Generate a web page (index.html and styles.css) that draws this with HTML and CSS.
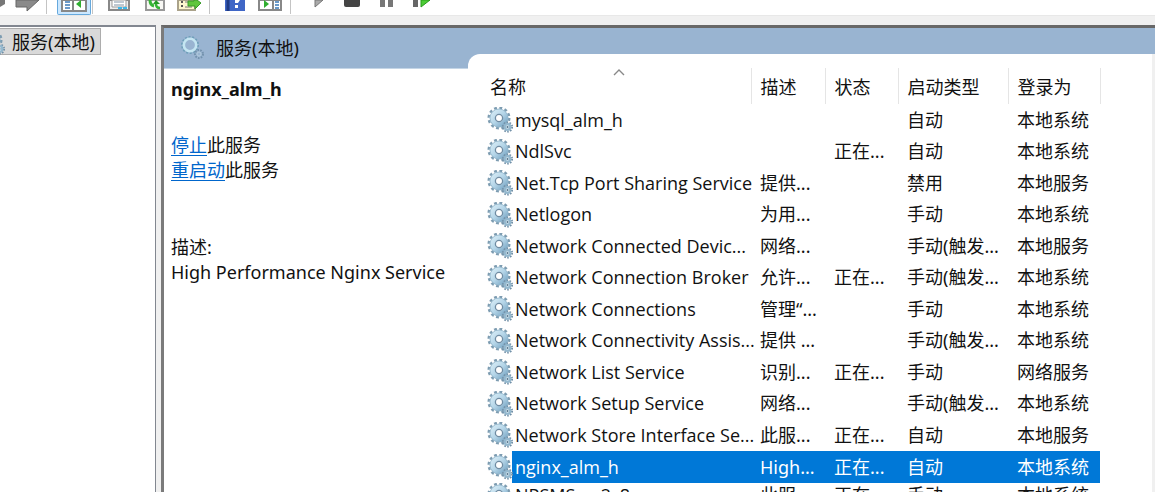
FILE: index.html
```
<!DOCTYPE html>
<html lang="zh-CN">
<head>
  <meta charset="UTF-8">
  <meta name="viewport" content="width=device-width, initial-scale=1.0">
  <title>服务</title>
  <link rel="stylesheet" href="styles.css">
</head>
<body>
  <svg class="defs" aria-hidden="true">
    <defs>
      <linearGradient id="metal" x1="0" y1="0" x2="1" y2="1">
        <stop offset="0" stop-color="#d3e9f4"/>
        <stop offset="0.5" stop-color="#b4d5e8"/>
        <stop offset="1" stop-color="#7ba8c6"/>
      </linearGradient>
      <symbol id="gear" viewBox="0 0 26 26">
        <circle cx="12" cy="11" r="10" fill="none" stroke="#7d9cb1" stroke-width="3" stroke-dasharray="2.8 2.44"/>
        <circle cx="12" cy="11" r="6.6" fill="none" stroke="url(#metal)" stroke-width="5.4"/>
        <circle cx="12" cy="11" r="9" fill="none" stroke="#93b6cc" stroke-width="0.8"/>
        <circle cx="12" cy="11" r="3.6" fill="#fff" stroke="#6f8ca3" stroke-width="1.3"/>
        <circle cx="20.5" cy="20" r="4.6" fill="none" stroke="#7391a8" stroke-width="2" stroke-dasharray="1.6 1.29"/>
        <circle cx="20.5" cy="20" r="2.8" fill="#dcebf3" stroke="#94b8ce" stroke-width="2.2"/>
        <circle cx="20.5" cy="20" r="1" fill="#55748c"/>
      </symbol>
    </defs>
  </svg>

  <div class="toolbar">
    <button class="tool back" aria-label="后退"><svg width="10" height="16"><path d="M0 0h5v4L0 7z" fill="#777"/></svg></button>
    <button class="tool forward" aria-label="前进"><svg width="28" height="16"><path d="M2 0v7h11v4L25 0z" fill="#8a8a8a" stroke="#666"/></svg></button>
    <span class="sep"></span>
    <button class="tool active" aria-label="显示/隐藏控制台树"><svg width="26" height="16"><path d="M1 0h24v11H1z" fill="#fff" stroke="#888" stroke-width="2"/><path d="M12 0v11" stroke="#888" stroke-width="2"/><path d="M4 2h5M4 5h5M4 8h5" stroke="#3b79b8" stroke-width="1.5"/><path d="M20 0v8l-5-4z" fill="#2fae2f"/></svg></button>
    <span class="sep"></span>
    <button class="tool props" aria-label="属性"><svg width="22" height="16"><path d="M1 0h20v10H1z" fill="#eee" stroke="#888" stroke-width="2"/><path d="M4 0h14v7H4z" fill="#fff" stroke="#999"/><path d="M6 2h10M6 5h10" stroke="#8193a5"/><path d="M10 8h4M15 8h4" stroke="#3cb8ea" stroke-width="2"/></svg></button>
    <button class="tool refresh" aria-label="刷新"><svg width="20" height="16"><path d="M1 0h18v10H1z" fill="#f8f8f4" stroke="#999" stroke-width="2"/><path d="M5 0q0 5 4 6" fill="none" stroke="#36b536" stroke-width="3"/><path d="M15 8q-4 0-4-4" fill="none" stroke="#36b536" stroke-width="2.5"/><path d="M8 4l3-4 4 4z" fill="#249c24"/></svg></button>
    <button class="tool export" aria-label="导出列表"><svg width="25" height="16"><path d="M1 0h17v10H1z" fill="#fdf6cf" stroke="#aaa28a" stroke-width="2"/><path d="M4 2h2M4 6h2" stroke="#555" stroke-width="2"/><path d="M8 2h6M8 7h7" stroke="#777"/><path d="M11 1h6v-1h3l4 3-6 6v-3h-7z" fill="#60c63d" stroke="#389a28"/></svg></button>
    <span class="sep"></span>
    <button class="tool help" aria-label="帮助"><svg width="20" height="16"><path d="M0 0h20v11H0z" fill="#3f66c6"/><path d="M3 0v11" stroke="#203b85" stroke-width="3"/><path d="M10 0h5l-2 3h-3zM10 5h3v3h-3z" fill="#fff"/></svg></button>
    <button class="tool pane" aria-label="显示/隐藏操作窗格"><svg width="24" height="16"><path d="M1 0h22v10H1z" fill="#fff" stroke="#888" stroke-width="2"/><path d="M15 0v11" stroke="#888" stroke-width="2"/><path d="M6 0v8l5-4z" fill="#2fae2f"/><path d="M17 2h4M17 5h4M17 8h4" stroke="#3b79b8" stroke-width="1.5"/></svg></button>
    <span class="sep"></span>
    <button class="tool start" aria-label="启动服务"><svg width="11" height="16"><path d="M1 0v7l8-7z" fill="#aaa" stroke="#777"/></svg></button>
    <button class="tool stop" aria-label="停止服务"><svg width="16" height="16"><path d="M0 0h16v5q0 2-2 2H2q-2 0-2-2z" fill="#444"/></svg></button>
    <button class="tool pause" aria-label="暂停服务"><svg width="13" height="16"><path d="M0 0h5v7H0zM8 0h5v7H8z" fill="#777"/></svg></button>
    <button class="tool restart" aria-label="重启动服务"><svg width="18" height="16"><path d="M0 0h5v7H0z" fill="#666"/><path d="M8 0v7l9-7z" fill="#4ccc35" stroke="#299c1d"/></svg></button>
  </div>

  <div class="main">
    <div class="tree">
      <button class="node"><svg class="node-icon" width="26" height="26"><use href="#gear"/></svg>服务(本地)</button>
    </div>

    <div class="view">
      <div class="side">
        <div class="banner">
          <svg width="26" height="26"><circle cx="11" cy="10" r="8" fill="none" stroke="#6f9fb9" stroke-width="2" stroke-dasharray="2 1.6"/><circle cx="11" cy="10" r="6.2" fill="none" stroke="#c5e6f2" stroke-width="2.6"/><circle cx="20" cy="19" r="4" fill="none" stroke="#7392ad" stroke-width="2" stroke-dasharray="1.6 1.2"/><circle cx="20" cy="19" r="2" fill="none" stroke="#b2cbdc"/></svg>
          <span>服务(本地)</span>
        </div>
        <div class="info">
          <h2>nginx_alm_h</h2>
          <p><a href="#stop">停止</a>此服务</p>
          <p><a href="#restart">重启动</a>此服务</p>
          <p class="desc">描述:</p>
          <p>High Performance Nginx Service</p>
        </div>
      </div>

      <div class="list">
        <div class="sheet">
          <table>
            <colgroup>
              <col class="c-icon"><col class="c-name"><col class="c-desc"><col class="c-state"><col class="c-type"><col class="c-user">
            </colgroup>
            <thead>
              <tr>
                <th colspan="2" class="sorted">名称<svg class="caret" width="12" height="8"><path d="M1 7l5-5 5 5" fill="none" stroke="#888" stroke-width="1.4"/></svg></th>
                <th>描述</th><th>状态</th><th>启动类型</th><th>登录为</th>
              </tr>
            </thead>
            <tbody>
              <tr><td class="icon"><svg><use href="#gear"/></svg></td><td class="name">mysql_alm_h</td><td></td><td></td><td>自动</td><td>本地系统</td></tr>
              <tr><td class="icon"><svg><use href="#gear"/></svg></td><td class="name">NdlSvc</td><td></td><td>正在...</td><td>自动</td><td>本地系统</td></tr>
              <tr><td class="icon"><svg><use href="#gear"/></svg></td><td class="name">Net.Tcp Port Sharing Service</td><td>提供...</td><td></td><td>禁用</td><td>本地服务</td></tr>
              <tr><td class="icon"><svg><use href="#gear"/></svg></td><td class="name">Netlogon</td><td>为用...</td><td></td><td>手动</td><td>本地系统</td></tr>
              <tr><td class="icon"><svg><use href="#gear"/></svg></td><td class="name">Network Connected Devic...</td><td>网络...</td><td></td><td>手动(触发...</td><td>本地服务</td></tr>
              <tr><td class="icon"><svg><use href="#gear"/></svg></td><td class="name">Network Connection Broker</td><td>允许...</td><td>正在...</td><td>手动(触发...</td><td>本地系统</td></tr>
              <tr><td class="icon"><svg><use href="#gear"/></svg></td><td class="name">Network Connections</td><td>管理“...</td><td></td><td>手动</td><td>本地系统</td></tr>
              <tr><td class="icon"><svg><use href="#gear"/></svg></td><td class="name">Network Connectivity Assis...</td><td>提供 ...</td><td></td><td>手动(触发...</td><td>本地系统</td></tr>
              <tr><td class="icon"><svg><use href="#gear"/></svg></td><td class="name">Network List Service</td><td>识别...</td><td>正在...</td><td>手动</td><td>网络服务</td></tr>
              <tr><td class="icon"><svg><use href="#gear"/></svg></td><td class="name">Network Setup Service</td><td>网络...</td><td></td><td>手动(触发...</td><td>本地系统</td></tr>
              <tr><td class="icon"><svg><use href="#gear"/></svg></td><td class="name">Network Store Interface Se...</td><td>此服...</td><td>正在...</td><td>自动</td><td>本地服务</td></tr>
              <tr class="selected"><td class="icon"><svg><use href="#gear"/></svg></td><td class="name">nginx_alm_h</td><td>High...</td><td>正在...</td><td>自动</td><td>本地系统</td></tr>
              <tr><td class="icon"><svg><use href="#gear"/></svg></td><td class="name">NPSMSvc_2c8</td><td>此服...</td><td>正在...</td><td>手动</td><td>本地系统</td></tr>
            </tbody>
          </table>
        </div>
      </div>
    </div>
  </div>
</body>
</html>
```

FILE: styles.css
```
* { box-sizing: border-box; }
body { margin: 0; height: 100vh; overflow: hidden; display: flex; flex-direction: column; background: #f0f0f0; color: #111; font-family: "Noto Sans", "Noto Sans CJK SC", sans-serif; font-size: 18px; line-height: 26px; }
button { font: inherit; color: inherit; border: 0; padding: 0; background: none; }
svg { display: block; flex: none; }
.defs { position: absolute; width: 0; height: 0; }

.toolbar { flex: none; height: 16px; display: flex; align-items: flex-start; background: #fff; border-bottom: 1px solid #e8e8e8; }
.tool { flex: none; height: 15px; overflow: hidden; }
.sep { flex: none; width: 1px; height: 14px; background: #c4c4c4; }
.forward { margin: 0 4px; }
.active { margin: 0 1px 0 10px; padding: 0 3px; border: 1px solid #66a9dd; border-top: 0; border-radius: 0 0 2px 2px; background: #cce8ff; }
.props { margin-left: 15px; }
.refresh { margin-left: 15px; }
.export { margin: 0 7px 0 12px; }
.help { margin-left: 15px; }
.pane { margin: 0 8px 0 13px; }
.start { margin-left: 23px; }
.stop { margin-left: 19px; }
.pause { margin-left: 20px; }
.restart { margin-left: 20px; }

.main { flex: 1; min-height: 0; display: flex; gap: 5px; padding-top: 9px; }
.tree { flex: none; width: 156px; background: #fff; border: 2px solid #828790; border-width: 2px 1px 0 0; }
.node { display: flex; align-items: center; height: 27px; margin-top: 1px; padding-right: 5px; background: #d9d9d9; border: 1px solid #adadad; border-left: 0; }
.node-icon { margin: 0 7px 0 -21px; }
.view { flex: 1; min-width: 0; display: flex; background: #fff; border: 3px solid #7b7b7b; border-width: 3px 0 0 3px; border-top-color: #686868; }
.side { flex: none; width: 304px; }
.banner { display: flex; align-items: center; gap: 11px; height: 41px; padding-left: 15px; background: #99b4d1; border-bottom: 1px solid #c4d5e6; }
.info { padding: 7px; }
h2 { margin: 0 0 31px; font-size: 18px; line-height: 26px; }
p { margin: 0; line-height: 25px; }
a { color: #0066cc; text-decoration: underline; text-underline-offset: 3px; }
.desc { margin-top: 52px; }

.list { flex: 1; min-width: 0; display: flex; background: #99b4d1; padding-top: 26px; }
.sheet { flex: 1; min-width: 0; padding: 14px 0 0 19px; background: #fff; border-right: 3px solid #f0f0f0; border-top-left-radius: 12px; }
table { table-layout: fixed; width: 613px; border-collapse: collapse; }
.c-icon { width: 25px; }
.c-name { width: 239px; }
.c-desc { width: 74px; }
.c-state { width: 73px; }
.c-type { width: 110px; }
.c-user { width: 92px; }
th { position: relative; height: 36px; padding: 2px 0 0 9px; font-weight: normal; text-align: left; border-right: 1px solid #e5e5e5; }
.sorted { padding-left: 3px; }
.caret { position: absolute; top: 0; left: 50%; margin-left: -6px; }
td { height: 32px; padding: 0 0 1px 9px; line-height: 24px; white-space: nowrap; }
tr:nth-child(even) td { height: 31px; }
tbody .selected td { height: 32px; color: #fff; background: #0078d7; }
td.icon { padding: 0; }
.icon svg { width: 26px; height: 26px; }
td.name { padding-left: 3px; font-family: "Open Sans", "Noto Sans CJK SC", sans-serif; }
tbody .selected .icon { background: #fff; }
tbody tr:last-child td { vertical-align: top; }
```
